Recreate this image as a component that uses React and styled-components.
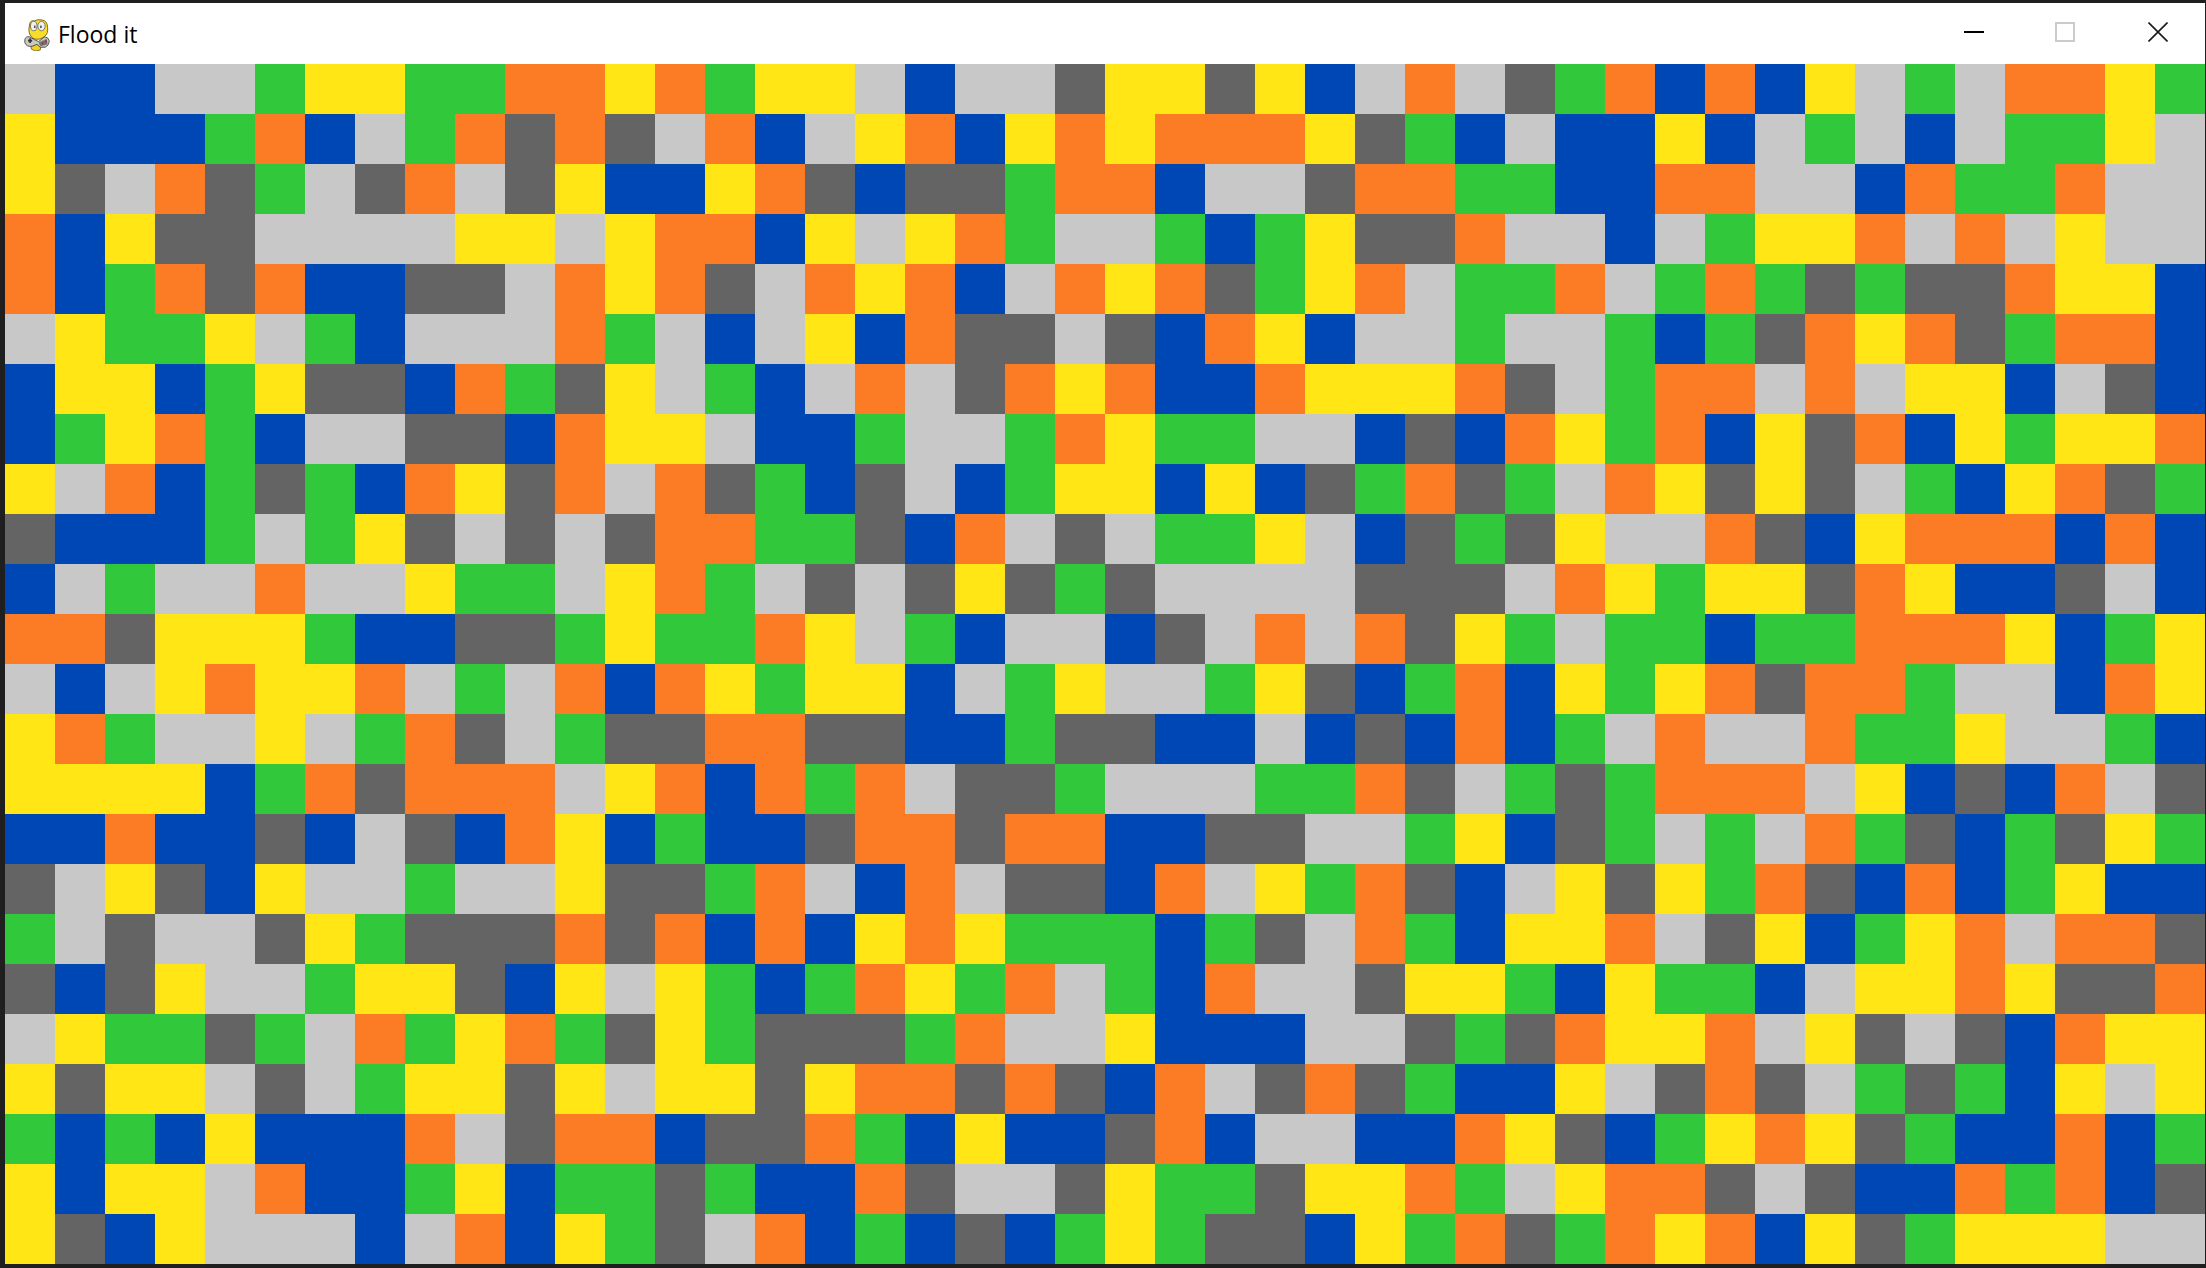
import styled, { createGlobalStyle } from "styled-components"

const Global = createGlobalStyle`
html, body {
    margin: 0;
    padding: 0;
    background: #1f1f1f;
}
`

const colors = {
    S: "#c8c8c8",
    B: "#0047b6",
    G: "#32c83c",
    Y: "#ffe614",
    O: "#fc7c26",
    D: "#646464",
}

// one string per row, 44 cells each
const board = [
    "SBBSSGYYGGOOYOGYYSBSSD" + "YYDYBSOSDGOBOBYSGSOOYG",
    "YBBBGOBSGODODSOBSYOBYO" + "YOOOYDGBSBBYBSGSBSGGYS",
    "YDSODGSDOSDYBBYODBDDGO" + "OBSSDOOGGBBOOSSBOGGOSS",
    "OBYDDSSSSYYSYOOBYSYOGS" + "SGBGYDDOSSBSGYYOSOSYSS",
    "OBGODOBBDDSOYODSOYOBSO" + "YODGYOSGGOSGOGDGDDOYYB",
    "SYGGYSGBSSSOGSBSYBODDS" + "DBOYBSSGSSGBGDOYODGOOB",
    "BYYBGYDDBOGDYSGBSOSDOY" + "OBBOYYYODSGOOSOSYYBSDB",
    "BGYOGBSSDDBOYYSBBGSSGO" + "YGGSSBDBOYGOBYDOBYGYYO",
    "YSOBGDGBOYDOSODGBDSBGY" + "YBYBDGODGSOYDYDSGBYODG",
    "DBBBGSGYDSDSDOOGGDBOSD" + "SGGYSBDGDYSSODBYOOOBOB",
    "BSGSSOSSYGGSYOGSDSDYDG" + "DSSSSDDDSOYGYYDOYBBDSB",
    "OODYYYGBBDDGYGGOYSGBSS" + "BDSOSODYGSGGBGGOOOYBGY",
    "SBSYOYYOSGSOBOYGYYBSGY" + "SSGYDBGOBYGYODOOGSSBOY",
    "YOGSSYSGODSGDDOODDBBGD" + "DBBSBDBOBGSOSSOGGYSSGB",
    "YYYYBGODOOOSYOBOGOSDDG" + "SSSGGODSGDGOOOSYBDBOSD",
    "BBOBBDBSDBOYBGBBDOODOO" + "BBDDSSGYBDGSGSOGDBGDYG",
    "DSYDBYSSGSSYDDGOSBOSDD" + "BOSYGODBSYDYGODBOBGYBB",
    "GSDSSDYGDDDODOBOBYOYGG" + "GBGDSOGBYYOSDYBGYOSOOD",
    "DBDYSSGYYDBYSYGBGOYGOS" + "GBOSSDYYGBYGGBSYYOYDDO",
    "SYGGDGSOGYOGDYGDDDGOSS" + "YBBBSSDGDOYYOSYDSDBOYY",
    "YDYYSDSGYYDYSYYDYOODOD" + "BOSDODGBBYSDODSGDGBYSY",
    "GBGBYBBBOSDOOBDDOGBYBB" + "DOBSSBBOYDBGYOYDGBBOBG",
    "YBYYSOBBGYBGGDGBBODSSD" + "YGGDYYOGSYOODSDBBOGOBD",
    "YDBYSSSBSOBYGDSOBGBDBG" + "YGDDBYGODGOYOBYDGYYYSS",
]

const FloodIt = () => {
    return (
        <>
            <Global />
            <Desktop>
                <Window>
                    <TitleBar>
                        <GameIcon />
                        <TitleText>Flood it</TitleText>
                        <Controls>
                            <ControlButton>
                                <svg width="20" height="20" viewBox="0 0 20 20">
                                    <rect x="0" y="9" width="20" height="2" fill="#000" />
                                </svg>
                            </ControlButton>
                            <ControlButton>
                                <svg width="20" height="20" viewBox="0 0 20 20">
                                    <rect x="1" y="1" width="18" height="18" fill="none" stroke="#ccc" strokeWidth="2" />
                                </svg>
                            </ControlButton>
                            <CloseButton>
                                <svg width="20" height="20" viewBox="0 0 20 20">
                                    <path d="M0.5 0.5 L19.5 19.5 M19.5 0.5 L0.5 19.5" stroke="#1a1a1a" strokeWidth="1.6" fill="none" />
                                </svg>
                            </CloseButton>
                        </Controls>
                    </TitleBar>
                    <Board>
                        {board.map((row, y) =>
                            row.split("").map((c, x) => <Cell key={y + "-" + x} $color={colors[c]} />)
                        )}
                    </Board>
                </Window>
            </Desktop>
        </>
    )
}

const GameIcon = () => {
    return (
        <IconSvg width="26" height="32" viewBox="0 0 32 34" preserveAspectRatio="none">
            {/* body */}
            <path d="M8 26 L9 32 L14 34 L20 33 L21 27 Z" fill="#f0d020" stroke="#5a4a10" strokeWidth="0.8" />
            {/* head */}
            <path d="M7 5 Q8 1 13 2 Q16 0 22 1 Q29 2 29 9 Q30 15 26 18 Q20 23 12 21 Q6 18 6 11 Z" fill="#f7dc2a" stroke="#6b5a12" strokeWidth="1" />
            {/* eyes */}
            <ellipse cx="12" cy="7.5" rx="4" ry="5" fill="#eee" stroke="#555" strokeWidth="0.8" />
            <ellipse cx="21.5" cy="7.5" rx="4.5" ry="5" fill="#eee" stroke="#555" strokeWidth="0.8" />
            <rect x="12.5" y="7" width="1.6" height="2.6" fill="#333" />
            <rect x="20" y="7" width="1.6" height="2.6" fill="#333" />
            {/* controller */}
            <path d="M1 22 Q2 18 7 19 L13 22 L18 24 L25 19 Q30 19 31 23 Q31 28 26 30 L20 30 L16 27 L10 29 Q3 30 1 25 Z" fill="#c9c9c0" stroke="#444" strokeWidth="1" />
            <rect x="5" y="22" width="5" height="2" fill="#333" />
            <rect x="6.5" y="20.5" width="2" height="5" fill="#333" />
            <path d="M18 25 L28 21 L29 27 L20 29 Z" fill="#777" />
            <rect x="22" y="25" width="2" height="2" fill="#b02020" />
            <rect x="26" y="23" width="2" height="2" fill="#b02020" />
        </IconSvg>
    )
}

const Desktop = styled.div`
width: 2206px;
height: 1268px;
box-sizing: border-box;
padding: 3px 1px 4px 5px;
background: #1f1f1f;
overflow: hidden;
`

const Window = styled.div`
display: flex;
flex-direction: column;
width: 2200px;
`

const TitleBar = styled.div`
display: flex;
align-items: center;
height: 61px;
background: #fff;
padding-left: 19px;
`

const IconSvg = styled.svg`
flex: none;
margin-right: 8px;
margin-top: 2px;
`

const TitleText = styled.span`
font-family: "Open Sans", "Noto Sans", sans-serif;
font-size: 23px;
color: #000;
white-space: nowrap;
margin-top: 1px;
`

const Controls = styled.div`
display: flex;
align-items: center;
margin-left: auto;
padding-right: 37px;
gap: 71px;
margin-top: -3px;
`

const ControlButton = styled.div`
display: flex;
width: 20px;
height: 20px;
`

const CloseButton = styled(ControlButton)`
margin-left: 2px;
`

const Board = styled.div`
display: grid;
grid-template-columns: repeat(44, 50px);
grid-auto-rows: 50px;
`

const Cell = styled.div`
background: ${(p) => p.$color};
`

export default FloodIt
